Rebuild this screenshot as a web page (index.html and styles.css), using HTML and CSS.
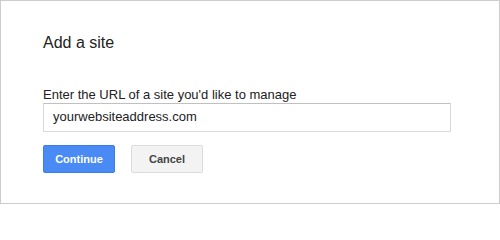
FILE: index.html
```html
<!DOCTYPE html>
<html>
<head>
<meta charset="utf-8">
<link rel="stylesheet" href="styles.css">
</head>
<body>
<div class="frame">
  <h1 class="title">Add a site</h1>
  <label class="label" for="url">Enter the URL of a site you'd like to manage</label>
  <input class="field" id="url" type="text" value="yourwebsiteaddress.com">
  <div class="actions">
    <button class="btn btn-primary">Continue</button>
    <button class="btn btn-secondary">Cancel</button>
  </div>
</div>
</body>
</html>
```
FILE: styles.css
```css
html, body {
  margin: 0;
  padding: 0;
  background: #fff;
}
.frame {
  box-sizing: border-box;
  width: 500px;
  height: 204px;
  border: 1px solid #cccccc;
  padding: 32px 0 0 42px;
  font-family: "Liberation Sans", Arial, sans-serif;
  display: flex;
  flex-direction: column;
  align-items: flex-start;
}
.title {
  margin: 0;
  font-size: 16px;
  font-weight: normal;
  line-height: 20px;
  color: #222;
}
.label {
  margin-top: 34px;
  font-size: 13px;
  line-height: 16px;
  color: #222;
}
.field {
  box-sizing: border-box;
  margin: 0;
  width: 408px;
  height: 29px;
  padding: 0 9px 2px;
  border: 1px solid #d9d9d9;
  border-top-color: #c0c0c0;
  border-radius: 1px;
  font-family: "Liberation Sans", Arial, sans-serif;
  font-size: 13px;
  color: #222;
  outline: none;
}
.actions {
  display: flex;
  gap: 16px;
  margin-top: 13px;
}
.btn {
  box-sizing: border-box;
  height: 28px;
  min-width: 72px;
  padding: 0 8px;
  border-radius: 2px;
  font-family: "Liberation Sans", Arial, sans-serif;
  font-size: 11px;
  font-weight: bold;
  line-height: 26px;
  margin: 0;
}
.btn-primary {
  background: #4a8af4;
  border: 1px solid #3b7de9;
  color: #fff;
}
.btn-secondary {
  background: #f3f3f3;
  border: 1px solid #dcdcdc;
  color: #444;
}
```
